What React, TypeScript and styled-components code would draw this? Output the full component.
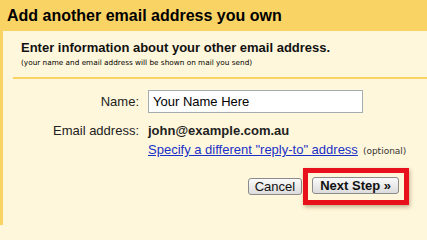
import React from "react";
import styled, { createGlobalStyle } from "styled-components";

const GlobalStyle = createGlobalStyle`
  html, body {
    margin: 0;
    padding: 0;
    background: #fff7db;
  }
  body {
    font-family: Arial, "Liberation Sans", sans-serif;
    color: #000;
  }
`;

const Page = styled.div`
  width: 427px;
  height: 225px;
  overflow: hidden;
  background: #fff7db;
  border-left: 3px solid #fad365;
  box-sizing: border-box;
`;

const Header = styled.div`
  height: 31px;
  margin-left: -3px;
  background: #fad365;
  box-sizing: border-box;
  padding: 6px 0 0 7px;
  font-size: 16px;
  font-weight: bold;
  line-height: 20px;
`;

const Section = styled.div`
  padding: 9px 0 0 18px;
  height: 46px;
  box-sizing: border-box;
`;

const Intro = styled.div`
  font-size: 13px;
  font-weight: bold;
  line-height: 16px;
  color: #111;
`;

const Hint = styled.div`
  font-family: "DejaVu Sans", Verdana, sans-serif;
  font-size: 7.3px;
  line-height: 10px;
  margin-top: 2px;
`;

const Divider = styled.hr`
  margin: 0 0 0 10px;
  border: none;
  border-top: 2px solid #fad365;
`;

const Form = styled.div`
  display: grid;
  grid-template-columns: 136px 1fr;
  column-gap: 9px;
  padding-top: 11px;
  align-items: center;
`;

const Label = styled.div`
  text-align: right;
  font-size: 13px;
  color: #222;
`;

const TextInput = styled.input`
  width: 215px;
  height: 23px;
  box-sizing: border-box;
  border: 1px solid #a5acb2;
  padding: 2px 4px;
  font-family: Arial, "Liberation Sans", sans-serif;
  font-size: 13px;
  background: #fff;
  outline: none;
  margin: 0;
`;

const EmailLabel = styled(Label)`
  margin-top: 10px;
`;

const Address = styled.div`
  font-size: 13px;
  font-weight: bold;
  color: #222;
  margin-top: 10px;
`;

const LinkRow = styled.div`
  grid-column: 2;
  font-size: 13px;
  margin-top: 4px;
  display: flex;
  align-items: baseline;
  gap: 5px;
`;

const Link = styled.a`
  color: #1a2fc7;
  text-decoration: underline;
`;

const Optional = styled.span`
  font-family: "DejaVu Sans", Verdana, sans-serif;
  font-size: 9px;
  color: #333;
`;

const Actions = styled.div`
  display: flex;
  justify-content: flex-end;
  align-items: center;
  gap: 1px;
  padding: 11px 18px 0 0;
`;

const Button = styled.button<{ $primary?: boolean }>`
  height: 17px;
  margin: 0;
  padding: 0 ${(p) => (p.$primary ? "7px" : "6px")};
  font-family: Arial, "Liberation Sans", sans-serif;
  font-size: 13px;
  font-weight: ${(p) => (p.$primary ? "bold" : "normal")};
  color: #111;
  border: 1px solid #8b8b8b;
  border-radius: 3px;
  background: linear-gradient(#fafafa, #dcdcdc);
  line-height: 15px;
`;

const Highlight = styled.div`
  display: flex;
  border: 5px solid #e8101a;
  padding: 4px 5px 6px 4px;
  box-shadow: 1px 2px 4px rgba(80, 40, 0, 0.35);
`;

export default function App() {
  return (
    <>
      <GlobalStyle />
      <Page>
        <Header>Add another email address you own</Header>
        <Section>
          <Intro>Enter information about your other email address.</Intro>
          <Hint>(your name and email address will be shown on mail you send)</Hint>
        </Section>
        <Divider />
        <Form>
          <Label>Name:</Label>
          <TextInput defaultValue="Your Name Here" />
          <EmailLabel>Email address:</EmailLabel>
          <Address>john@example.com.au</Address>
          <LinkRow>
            <Link href="#">Specify a different "reply-to" address</Link>
            <Optional>(optional)</Optional>
          </LinkRow>
        </Form>
        <Actions>
          <Button>Cancel</Button>
          <Highlight>
            <Button $primary>Next Step »</Button>
          </Highlight>
        </Actions>
      </Page>
    </>
  );
}
